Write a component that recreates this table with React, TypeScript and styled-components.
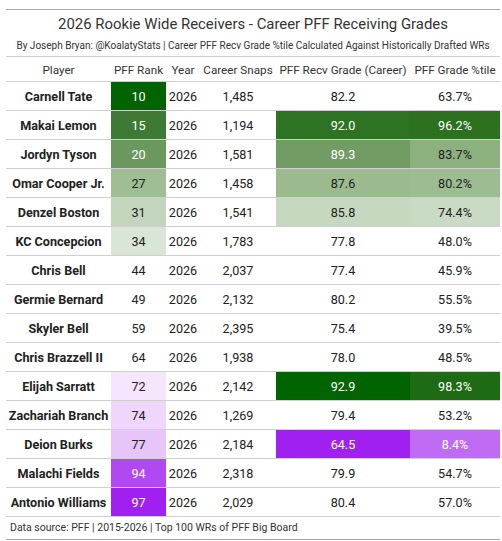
import React from "react";
import styled, { createGlobalStyle } from "styled-components";

const Global = createGlobalStyle`
  html, body { margin: 0; padding: 0; background: #fff; }
  body { font-family: Roboto, "Noto Sans", sans-serif; color: #222; }
`;

const Wrap = styled.div`
  padding: 9px 2px 0 6px;
  width: 494px;
`;

const Header = styled.div`
  border-top: 1px solid #a8a8a8;
  border-bottom: 1px solid #d0d0d0;
  display: flex;
  flex-direction: column;
  align-items: center;
`;

const Title = styled.div`
  height: 26px;
  line-height: 29px;
  font-size: 14.9px;
  color: #333;
  white-space: nowrap;
`;

const Subtitle = styled.div`
  height: 20px;
  line-height: 19px;
  font-size: 10px;
  color: #333;
  white-space: nowrap;
`;

const Grid = styled.div`
  display: grid;
  grid-template-columns: 105px 55px 34px 76px 134px 90px;
`;

const Row = styled.div<{ $h: number }>`
  display: contents;
  & > div {
    height: ${(p) => p.$h}px;
    border-bottom: 1px solid #d0d0d0;
  }
`;

const Cell = styled.div<{ $bg?: string; $light?: boolean; $bold?: boolean; $head?: boolean }>`
  display: flex;
  align-items: center;
  justify-content: center;
  padding-top: 1px;
  box-sizing: border-box;
  white-space: nowrap;
  font-size: ${(p) => (p.$head ? 11.7 : 12.6)}px;
  font-weight: ${(p) => (p.$bold ? 700 : 400)};
  background: ${(p) => p.$bg || "transparent"};
  color: ${(p) => (p.$light ? "#fff" : p.$head ? "#333" : "#222")};
`;

const Footer = styled.div`
  height: 22px;
  line-height: 22px;
  font-size: 10.5px;
  color: #333;
  padding-left: 4px;
  border-bottom: 1px solid #a8a8a8;
`;

type C = [string, string?, boolean?];
type R = { name: string; rank: C; snaps: string; grade: C; pct: C };

const rows: R[] = [
  { name: "Carnell Tate", rank: ["10", "#006400", true], snaps: "1,485", grade: ["82.2"], pct: ["63.7%"] },
  { name: "Makai Lemon", rank: ["15", "#3f7a34", true], snaps: "1,194", grade: ["92.0", "#2e7323", true], pct: ["96.2%", "#2c7020", true] },
  { name: "Jordyn Tyson", rank: ["20", "#6b985e", true], snaps: "1,581", grade: ["89.3", "#719c63", true], pct: ["83.7%", "#8db07f"] },
  { name: "Omar Cooper Jr.", rank: ["27", "#9fbe95"], snaps: "1,458", grade: ["87.6", "#9bbb8f"], pct: ["80.2%", "#9dbc91"] },
  { name: "Denzel Boston", rank: ["31", "#c3d6bd"], snaps: "1,541", grade: ["85.8", "#c6d8c0"], pct: ["74.4%", "#c9dbc4"] },
  { name: "KC Concepcion", rank: ["34", "#d9e5d5"], snaps: "1,783", grade: ["77.8"], pct: ["48.0%"] },
  { name: "Chris Bell", rank: ["44"], snaps: "2,037", grade: ["77.4"], pct: ["45.9%"] },
  { name: "Germie Bernard", rank: ["49"], snaps: "2,132", grade: ["80.2"], pct: ["55.5%"] },
  { name: "Skyler Bell", rank: ["59"], snaps: "2,395", grade: ["75.4"], pct: ["39.5%"] },
  { name: "Chris Brazzell II", rank: ["64"], snaps: "1,938", grade: ["78.0"], pct: ["48.5%"] },
  { name: "Elijah Sarratt", rank: ["72", "#f5e6fd"], snaps: "2,142", grade: ["92.9", "#006400", true], pct: ["98.3%", "#1d6b13", true] },
  { name: "Zachariah Branch", rank: ["74", "#efd7fb"], snaps: "1,269", grade: ["79.4"], pct: ["53.2%"] },
  { name: "Deion Burks", rank: ["77", "#e7c5f8"], snaps: "2,184", grade: ["64.5", "#a020f0", true], pct: ["8.4%", "#c06bf3", true] },
  { name: "Malachi Fields", rank: ["94", "#b049f2", true], snaps: "2,318", grade: ["79.9"], pct: ["54.7%"] },
  { name: "Antonio Williams", rank: ["97", "#a020f0", true], snaps: "2,029", grade: ["80.4"], pct: ["57.0%"] },
];

const heads = ["Player", "PFF Rank", "Year", "Career Snaps", "PFF Recv Grade (Career)", "PFF Grade %tile"];

export default function App() {
  return (
    <>
      <Global />
      <Wrap>
        <Header>
          <Title>2026 Rookie Wide Receivers - Career PFF Receiving Grades</Title>
          <Subtitle>
            By Joseph Bryan: @KoalatyStats | Career PFF Recv Grade %tile Calculated Against Historically Drafted WRs
          </Subtitle>
        </Header>
        <Grid>
          <Row $h={25}>
            {heads.map((h) => (
              <Cell key={h} $head>
                {h}
              </Cell>
            ))}
          </Row>
          {rows.map((r) => (
            <Row key={r.name} $h={29}>
              <Cell $bold>{r.name}</Cell>
              <Cell $bg={r.rank[1]} $light={r.rank[2]}>{r.rank[0]}</Cell>
              <Cell>2026</Cell>
              <Cell>{r.snaps}</Cell>
              <Cell $bg={r.grade[1]} $light={r.grade[2]}>{r.grade[0]}</Cell>
              <Cell $bg={r.pct[1]} $light={r.pct[2]}>{r.pct[0]}</Cell>
            </Row>
          ))}
        </Grid>
        <Footer>Data source: PFF | 2015-2026 | Top 100 WRs of PFF Big Board</Footer>
      </Wrap>
    </>
  );
}
